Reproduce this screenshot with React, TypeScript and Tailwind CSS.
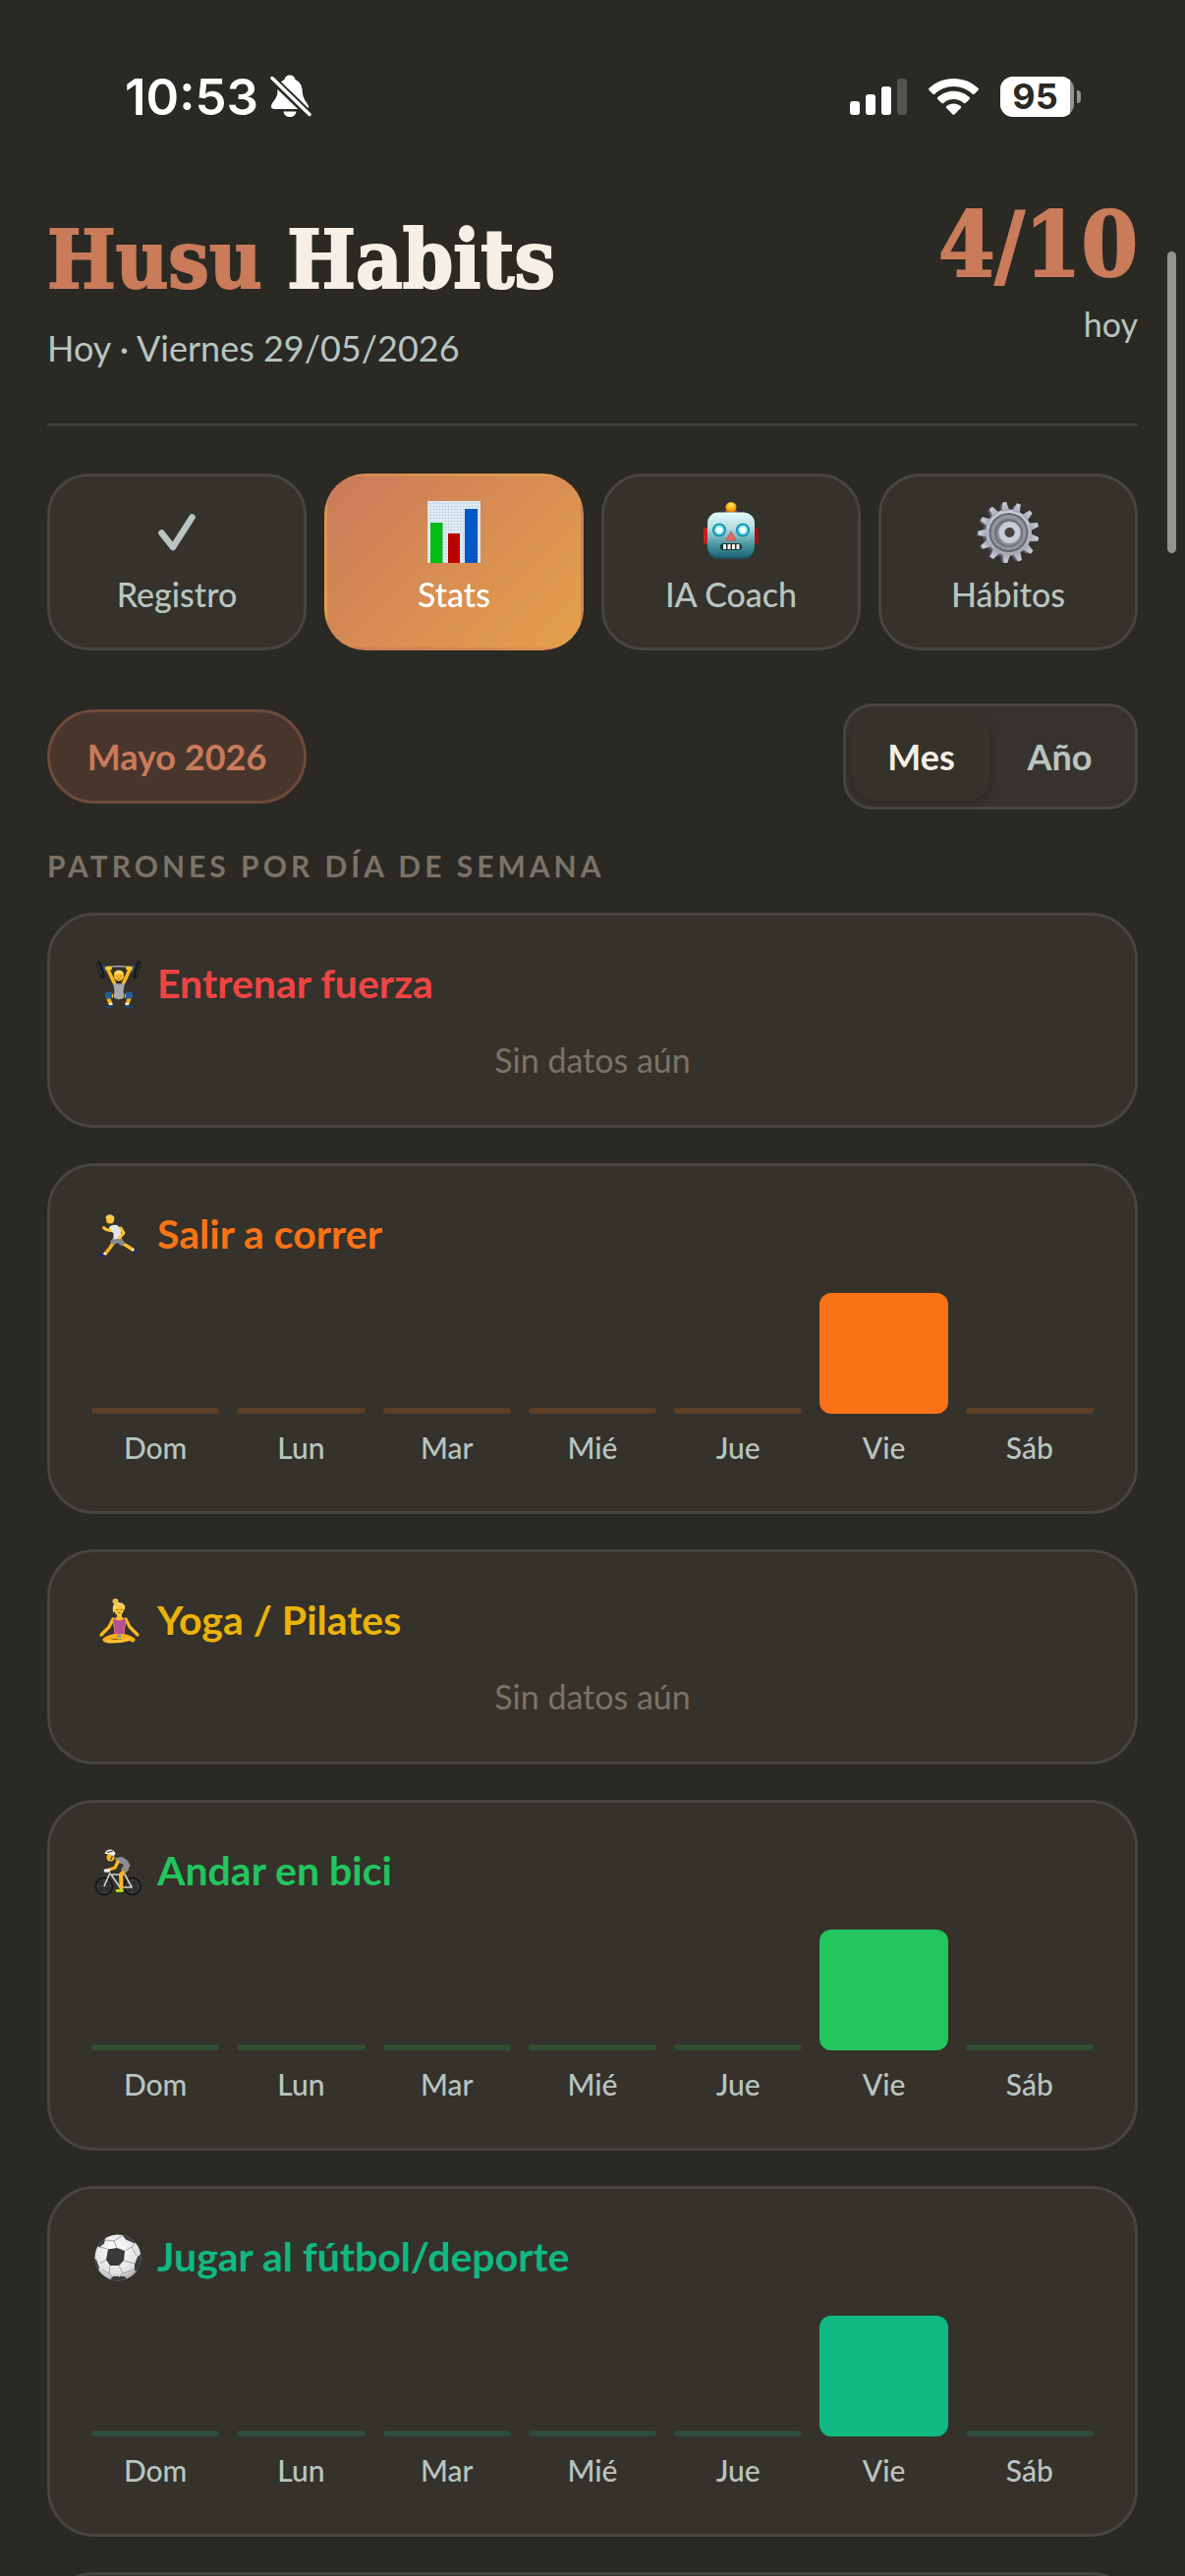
import { useState } from 'react';
import type { ReactNode } from 'react';
import clsx from 'clsx';

const DAYS = ['Dom', 'Lun', 'Mar', 'Mié', 'Jue', 'Vie', 'Sáb'];

type Habit = {
  name: string;
  icon: ReactNode;
  text: string;
  bar: string;
  track: string;
  // completion ratio per weekday, Sunday first; null when nothing was logged
  week: number[] | null;
};

function BellOffIcon() {
  return (
    <svg viewBox="0 0 42 44" className="h-[44px] w-[42px]" fill="none" aria-hidden="true">
      <path
        d="M20 0.5c-3.400 0-5 2.200-5.500 4.500C9 7.500 7.500 13 7.400 18c-.200 7-6.400 10-6.400 14.500C1 34 2 35 4 35h32c2 0 3-1 3-2.500 0-3-6-7-6.200-15-.100-5-1.800-10-7.300-12.500C25 2.700 23.400.5 20 .5Z"
        fill="#fff"
      />
      <path d="M13.500 37.500h13c-.400 3.500-3 5.500-6.500 5.500s-6.100-2-6.500-5.500Z" fill="#fff" />
      <path d="M2 4 40 41" stroke="#2a2924" strokeWidth="8" />
      <path d="M2 3.500 40 40.500" stroke="#fff" strokeWidth="3.500" strokeLinecap="round" />
    </svg>
  );
}

function SignalIcon() {
  return (
    <svg viewBox="0 0 58 37" className="h-[37px] w-[58px]" fill="#fff" aria-hidden="true">
      <rect x="0" y="23" width="10" height="14" rx="3" />
      <rect x="16" y="16" width="10" height="21" rx="3" />
      <rect x="32" y="8" width="10" height="29" rx="3" />
      <rect x="48" y="0" width="10" height="37" rx="3" opacity="0.2" />
    </svg>
  );
}

function WifiIcon() {
  return (
    <svg viewBox="0 0 51 37" className="h-[37px] w-[51px]" fill="#fff" aria-hidden="true">
      <path d="M25.500 0C15.700 0 7 3.700.500 9.800c-.600.600-.600 1.400 0 2l3.900 3.900c.500.500 1.300.500 1.900 0C11.300 10.900 18.100 8 25.500 8s14.200 2.900 19.200 7.700c.600.500 1.400.500 1.900 0l3.900-3.900c.600-.600.600-1.400 0-2C44 3.700 35.300 0 25.500 0Z" />
      <path d="M25.500 12.700c-6.200 0-11.900 2.400-16.200 6.300-.600.500-.600 1.400 0 1.900l3.900 3.900c.500.500 1.300.500 1.900.1 2.800-2.500 6.400-4 10.400-4s7.600 1.500 10.400 4c.600.400 1.400.400 1.900-.1l3.900-3.900c.600-.500.600-1.400 0-1.900-4.300-3.900-10-6.300-16.200-6.300Z" />
      <path d="M25.500 25.400c-2.800 0-5.300 1-7.200 2.700-.600.500-.600 1.300-.1 1.900l6.400 6.500c.500.500 1.300.500 1.800 0l6.400-6.500c.500-.600.500-1.400-.1-1.900-1.900-1.700-4.400-2.700-7.200-2.700Z" />
    </svg>
  );
}

function Battery({ level }: { level: number }) {
  return (
    <div className="flex items-center gap-[3px]">
      <div className="flex h-[41px] w-[75px] overflow-hidden rounded-[13px] bg-[#949391]">
        <span className="flex w-[71px] items-center justify-center bg-white text-[36px] leading-none font-bold text-[#2a2924]">
          {level}
        </span>
      </div>
      <span className="h-[13px] w-1 rounded-r-full bg-[#949391]" />
    </div>
  );
}

function CheckIcon() {
  return (
    <svg viewBox="0 0 66 66" className="size-[66px]" fill="none" aria-hidden="true">
      <path
        d="M17.500 33.500 29 48 48.500 17.500"
        stroke="#b8c5c0"
        strokeWidth="6.500"
        strokeLinecap="round"
        strokeLinejoin="round"
      />
    </svg>
  );
}

function ChartIcon() {
  return (
    <svg viewBox="0 0 66 66" className="size-[66px]" aria-hidden="true">
      <defs>
        <pattern id="grid" width="3" height="3" patternUnits="userSpaceOnUse">
          <rect width="3" height="3" fill="#e6eff6" />
          <path d="M0 0h3M0 0v3" stroke="#b9cddb" strokeWidth="1" />
        </pattern>
      </defs>
      <rect x="6" y="1" width="54" height="63" fill="url(#grid)" />
      <rect x="9" y="23" width="12.500" height="41" fill="#04bb18" />
      <rect x="27" y="34" width="12" height="30" fill="#bb0202" />
      <rect x="44" y="9" width="13" height="55" fill="#0558c4" />
    </svg>
  );
}

function RobotIcon() {
  return (
    <svg viewBox="0 0 66 66" className="size-[66px]" aria-hidden="true">
      <defs>
        <linearGradient id="robot" x1="0" y1="0" x2="0" y2="1">
          <stop offset="0" stopColor="#e2fcfb" />
          <stop offset="0.35" stopColor="#b5dcdc" />
          <stop offset="0.7" stopColor="#4d9ba5" />
          <stop offset="1" stopColor="#1c6577" />
        </linearGradient>
        <radialGradient id="bulb" cx="0.5" cy="0.3" r="0.7">
          <stop offset="0" stopColor="#fff06a" />
          <stop offset="0.6" stopColor="#fdaa0c" />
          <stop offset="1" stopColor="#d86a00" />
        </radialGradient>
      </defs>
      <rect x="5" y="28" width="8" height="17" rx="3" fill="#c81d1d" />
      <rect x="53" y="28" width="8" height="17" rx="3" fill="#a10f12" />
      <path d="M26 14c0-4 3-5 7-5s7 1 7 5v3H26Z" fill="#665084" />
      <circle cx="33" cy="7.500" r="5.500" fill="url(#bulb)" />
      <rect x="9" y="13" width="48" height="47" rx="11" fill="#1d5363" />
      <rect x="9" y="12.500" width="48" height="45.500" rx="11" fill="url(#robot)" />
      <circle cx="21" cy="30.500" r="7" fill="#1893b8" />
      <circle cx="45" cy="30.500" r="7" fill="#1893b8" />
      <circle cx="21" cy="30.500" r="5" fill="#7be3f7" />
      <circle cx="45" cy="30.500" r="5" fill="#7be3f7" />
      <circle cx="21" cy="30.500" r="3.200" fill="#fff" />
      <circle cx="45" cy="30.500" r="3.200" fill="#fff" />
      <path d="m33 32 5 9H28Z" fill="#ea6460" stroke="#c34a4b" strokeWidth="0.800" />
      <rect x="22" y="44" width="22" height="7" rx="3.500" fill="#1e3038" />
      <path d="M25 45h3v5h-3zM29.500 45h3v5h-3zM34 45h3v5h-3zM38.500 45h3v5h-3z" fill="#f4f1e6" />
    </svg>
  );
}

const TEETH = Array.from({ length: 13 }, (_, i) => (i * 360) / 13);

function GearIcon() {
  return (
    <svg viewBox="0 0 66 66" className="size-[66px]" aria-hidden="true">
      <defs>
        <linearGradient id="gear" x1="0" y1="0" x2="0" y2="1">
          <stop offset="0" stopColor="#c9d3df" />
          <stop offset="1" stopColor="#a9a5b2" />
        </linearGradient>
      </defs>
      <g fill="#535a63">
        <circle cx="31" cy="34" r="24" />
        {TEETH.map((angle) => (
          <path
            key={angle}
            d="M27.500 12 29 4h4l1.500 8Z"
            transform={`rotate(${angle - 8} 31 34)`}
          />
        ))}
      </g>
      <g fill="url(#gear)">
        <circle cx="33.500" cy="33" r="23.500" />
        {TEETH.map((angle) => (
          <path
            key={angle}
            d="M29.500 11 31.500 2h4l2 9Z"
            transform={`rotate(${angle - 8} 33.500 33)`}
          />
        ))}
      </g>
      <circle cx="33.500" cy="33" r="20" fill="#656a72" />
      <circle cx="33.500" cy="33" r="18" fill="#90949b" />
      <circle cx="33.500" cy="33.500" r="14.500" fill="#6f7278" />
      <circle cx="34" cy="34" r="12.500" fill="#8d8c92" />
      <circle cx="34.500" cy="33" r="8" fill="none" stroke="#c5cedb" strokeWidth="6" />
      <circle cx="34.500" cy="33" r="5" fill="#4b403c" />
    </svg>
  );
}

function LifterIcon() {
  return (
    <svg viewBox="0 0 51 54" className="h-[54px] w-[51px]" fill="none" aria-hidden="true">
      <path d="M14 11q13-3 28 0" stroke="#aab1b6" strokeWidth="1.300" />
      <g strokeLinecap="round">
        <path d="m7.500 7 4 12.500M48.500 7l-4 12.500" stroke="#17191b" strokeWidth="5" />
        <path d="m6.500 7 3.500 11M49.500 7 46 18" stroke="#34383b" strokeWidth="1.500" />
        <path d="m13 9 1.500 5M43 9l-1.500 5" stroke="#23557f" strokeWidth="2.500" />
      </g>
      <path
        d="m17 13 6.500 14M39 13l-6.500 14"
        stroke="#f8b91f"
        strokeWidth="3.600"
        strokeLinecap="round"
      />
      <path d="M16 11.500h3M37 11.500h3" stroke="#fdc834" strokeWidth="4" strokeLinecap="round" />
      <path d="M22 26q6 3 12 0l-1.500 9 1 6q-5.500 4.500-11 0l1-6Z" fill="#a9a9ad" />
      <path
        d="M22 39.500h-5.500l3 8.500M34 39.500h5.500l-3 8.500"
        stroke="#f4b01c"
        strokeWidth="4"
        strokeLinejoin="round"
      />
      <path
        d="M15.500 37h4v4h-4zM36.500 37h4v4h-4z"
        fill="#245d94"
        stroke="#245d94"
        strokeWidth="3"
        strokeLinejoin="round"
      />
      <path d="M18 48h3.500M34.500 48H38" stroke="#eef0f2" strokeWidth="2.500" />
      <path
        d="m14.500 51.500 6.500-1M41.500 51.500l-6.500-1"
        stroke="#1a4366"
        strokeWidth="2.500"
        strokeLinecap="round"
      />
      <circle cx="28" cy="19.500" r="5" fill="#fcc52e" />
      <path d="M23 18c0-6 10-6 10 0-3-2-7-2-10 0Z" fill="#f4dc74" />
      <path d="M25.500 19.500h1.500M29 19.500h1.500M26.500 22h3" stroke="#8c5a0c" strokeWidth="0.800" />
    </svg>
  );
}

function RunnerIcon() {
  return (
    <svg viewBox="0 0 51 54" className="h-[54px] w-[51px]" fill="none" aria-hidden="true">
      <path
        d="m23 35-4 6-5.500 7"
        stroke="#f3ae1d"
        strokeWidth="3.600"
        strokeLinecap="round"
        strokeLinejoin="round"
      />
      <path d="m30 36 6 3 6 4" stroke="#fbbf2b" strokeWidth="3.400" strokeLinecap="round" />
      <path d="m22 31 8-1 4.500 7-4 2-4-3-3.500 2-4-3Z" fill="#8a8b8e" />
      <path d="M18 20q3-3 8-2l4 3 .500 9q-4 3-8 2l0-6-4-2Z" fill="#e3e4e8" />
      <path
        d="m30 21 3 5-4.500 5M19 23.500l-4-1-2.500-2"
        stroke="#fcc02c"
        strokeWidth="3"
        strokeLinecap="round"
        strokeLinejoin="round"
      />
      <circle cx="19" cy="12.500" r="4" fill="#fcc52e" />
      <path d="M14.500 11c0-5 8.500-5 9 0l-1 3.500-2.500-3Z" fill="#f3cf57" />
      <path d="m13 48 1.500-1.500M42 43.500l1.500-1" stroke="#fff" strokeWidth="2.500" />
      <path
        d="m7.500 48 6 1.500M43.500 47l2-5"
        stroke="#20275e"
        strokeWidth="2.600"
        strokeLinecap="round"
      />
    </svg>
  );
}

function YogaIcon() {
  return (
    <svg viewBox="0 0 51 54" className="h-[54px] w-[51px]" fill="none" aria-hidden="true">
      <circle cx="24.500" cy="8" r="3" fill="#edba4b" />
      <path
        d="m22 26-4 8-8 8M35 26l4 8 8 8"
        stroke="#fbb91f"
        strokeWidth="3.200"
        strokeLinecap="round"
        strokeLinejoin="round"
      />
      <path d="M26 20h5v4l5 2-2 9v8H23v-8l-2-9 5-2Z" fill="#fbbc28" />
      <path d="M23 25q5.500 5 11 0l1 4-1.500 5 .500 9H23l.500-9L22 29Z" fill="#b94f96" />
      <path
        d="M14 47q8-5 15-3M42 47q-8-5-14-3"
        stroke="#f6ab1b"
        strokeWidth="5"
        strokeLinecap="round"
      />
      <path d="M16 48.500q12 1 22-2" stroke="#fdbf30" strokeWidth="3.500" strokeLinecap="round" />
      <path d="M26 43.500h4" stroke="#4e9bd8" strokeWidth="1.800" />
      <ellipse cx="28" cy="16" rx="5" ry="6" fill="#fdc52e" />
      <path d="M22.500 20c-2-7 0-11 5-11 6 0 8 4 6 8q-2-5-6-5-2 1-3 4Z" fill="#f0d06c" />
      <path d="M25.500 16.500h2M29.500 16.500h2M27 19.500h2.500" stroke="#8b5210" strokeWidth="0.900" />
    </svg>
  );
}

function BikeIcon() {
  return (
    <svg viewBox="0 0 51 54" className="h-[54px] w-[51px]" fill="none" aria-hidden="true">
      <g fill="#2c2b29" stroke="#141618" strokeWidth="1.800">
        <circle cx="13" cy="43" r="8.500" />
        <circle cx="41.500" cy="43" r="8.500" />
      </g>
      <g stroke="#54585c" strokeWidth="0.600">
        <circle cx="13" cy="43" r="6.800" />
        <circle cx="41.500" cy="43" r="6.800" />
        <path d="M13 36v14M6 43h14M41.500 36v14M35 43h13" />
      </g>
      <path
        d="m13 43 6-14M20 31l9 13h12l-7-13ZM20 31h14"
        stroke="#cfd3d7"
        strokeWidth="1.600"
        strokeLinejoin="round"
      />
      <path d="M11 23v4h6" stroke="#3a3d40" strokeWidth="1.800" />
      <path
        d="m36 25-6 6 .500 14"
        stroke="#fcb81f"
        strokeWidth="4"
        strokeLinecap="round"
        strokeLinejoin="round"
      />
      <path d="m24 14 7-1q7 3 8.500 9l-4.500 7-5-3 3-5-8-3Z" fill="#8b8d91" />
      <path
        d="m27 18-3 6-7 2.500"
        stroke="#fcb81f"
        strokeWidth="3.400"
        strokeLinecap="round"
        strokeLinejoin="round"
      />
      <path d="M14.500 27h3" stroke="#eef0f2" strokeWidth="3.600" strokeLinecap="round" />
      <path d="M26 47.500h5.500" stroke="#b6d619" strokeWidth="2.800" strokeLinecap="round" />
      <circle cx="19.500" cy="13.500" r="4" fill="#fbb51e" />
      <path d="M13.500 10c1-6 10-6 11 0l-2 2q-4-2.500-9-2Z" fill="#eceef0" />
      <path d="m16 8.500 6-1.500M21.500 12l-2 4" stroke="#34373a" strokeWidth="1.100" />
    </svg>
  );
}

function BallIcon() {
  return (
    <svg viewBox="0 0 51 54" className="h-[54px] w-[51px]" aria-hidden="true">
      <defs>
        <radialGradient id="ball" cx="0.45" cy="0.35" r="0.65">
          <stop offset="0" stopColor="#fff" />
          <stop offset="0.75" stopColor="#e2e2e2" />
          <stop offset="1" stopColor="#a9a9a9" />
        </radialGradient>
        <clipPath id="ball-clip">
          <circle cx="27" cy="28" r="23.500" />
        </clipPath>
      </defs>
      <circle cx="27" cy="28" r="23.500" fill="url(#ball)" />
      <g clipPath="url(#ball-clip)">
        <g fill="#3a3a3c">
          <path d="m17 19.500 9-1.500 8 3-1 10-5 5H19l-4-6Z" />
          <path d="m31 4.500 4 5 9 4 3-2-9-10ZM14 9.500l-1 4-5 4-3-3 5-7ZM52 23l-5 4-3 8v6l6 2ZM19 53l2-6h13l2 3-2 4ZM2 29l3 1 3 8-1 4-5-3Z" />
        </g>
        <path
          d="M26 18 23 11l-9-1M23 11l8-5M34 21l7-4 3-3M41 17l5 9M17 19.500l-6-2-3 0M15 30l-6 4M19 36l-1 8-7-4M28 36l4 8 11-4M32 44l-4 4M18 44l4 4M33 31l11 3"
          fill="none"
          stroke="#a4a4a4"
          strokeWidth="1"
        />
      </g>
    </svg>
  );
}

const TABS = [
  { id: 'registro', label: 'Registro', icon: <CheckIcon /> },
  { id: 'stats', label: 'Stats', icon: <ChartIcon /> },
  { id: 'coach', label: 'IA Coach', icon: <RobotIcon /> },
  { id: 'habitos', label: 'Hábitos', icon: <GearIcon /> },
];

const ONLY_FRIDAY = [0, 0, 0, 0, 0, 1, 0];

const HABITS: Habit[] = [
  {
    name: 'Entrenar fuerza',
    icon: <LifterIcon />,
    text: 'text-[#ef4444]',
    bar: 'bg-[#ef4444]',
    track: 'bg-[#ef4444]/20',
    week: null,
  },
  {
    name: 'Salir a correr',
    icon: <RunnerIcon />,
    text: 'text-[#f97316]',
    bar: 'bg-[#f97316]',
    track: 'bg-[#f97316]/20',
    week: ONLY_FRIDAY,
  },
  {
    name: 'Yoga / Pilates',
    icon: <YogaIcon />,
    text: 'text-[#eab308]',
    bar: 'bg-[#eab308]',
    track: 'bg-[#eab308]/20',
    week: null,
  },
  {
    name: 'Andar en bici',
    icon: <BikeIcon />,
    text: 'text-[#22c55e]',
    bar: 'bg-[#22c55e]',
    track: 'bg-[#22c55e]/20',
    week: ONLY_FRIDAY,
  },
  {
    name: 'Jugar al fútbol/deporte',
    icon: <BallIcon />,
    text: 'text-[#10b981]',
    bar: 'bg-[#10b981]',
    track: 'bg-[#10b981]/20',
    week: ONLY_FRIDAY,
  },
];

function StatusBar() {
  return (
    <div className="flex h-[60px] shrink-0 items-center justify-between pr-[106px] pl-[127px] font-['Inter',sans-serif] text-white">
      <div className="flex items-center gap-3">
        <span className="text-[51px] leading-none font-semibold">10:53</span>
        <BellOffIcon />
      </div>
      <div className="flex items-center gap-[22px]">
        <SignalIcon />
        <WifiIcon />
        <Battery level={95} />
      </div>
    </div>
  );
}

function WeekChart({ habit, week }: { habit: Habit; week: number[] }) {
  return (
    <div className="mt-[33px] grid grid-cols-7 gap-x-[18px]">
      {week.map((ratio, index) => (
        <div key={DAYS[index]}>
          <div className="flex h-[123px] items-end">
            {ratio > 0 ? (
              <div
                className={clsx('w-full rounded-xl', habit.bar)}
                style={{ height: `${ratio * 100}%` }}
              />
            ) : (
              <div className={clsx('h-1.5 w-full rounded-full', habit.track)} />
            )}
          </div>
          <p className="mt-3 text-center text-[30px] leading-[45px] font-medium text-[#b8c5c0]">
            {DAYS[index]}
          </p>
        </div>
      ))}
    </div>
  );
}

function HabitCard({ habit }: { habit: Habit }) {
  return (
    <article className="rounded-[48px] border-3 border-[#474540] bg-[#35312b] p-[42px]">
      <h3
        className={clsx(
          'flex items-center gap-4 text-[41px] leading-[54px] font-bold',
          habit.text
        )}
      >
        {habit.icon}
        {habit.name}
      </h3>
      {habit.week ? (
        <WeekChart habit={habit} week={habit.week} />
      ) : (
        <p className="mt-[27px] text-center text-[34px] leading-[48px] text-[#7a7368]">
          Sin datos aún
        </p>
      )}
    </article>
  );
}

export default function App() {
  const [tab, setTab] = useState('stats');
  const [range, setRange] = useState('Mes');

  return (
    <div className="relative flex h-screen flex-col overflow-hidden bg-[#2a2924] pt-[68px] font-['Lato',sans-serif]">
      <StatusBar />

      <main className="shrink-0 px-12 pt-[76px]">
        <header className="flex items-start justify-between border-b-3 border-[#3d3b36] pb-[53px]">
          <div className="pt-3">
            <h1 className="font-['DejaVu_Serif_Condensed','DejaVu_Serif',serif] text-[82px] leading-[96px] font-bold text-[#f5efe6] [-webkit-text-stroke:2px_currentColor]">
              <span className="text-[#c97b5a]">Husu</span> Habits
            </h1>
            <p className="mt-[18px] text-[36px] leading-[48px] text-[#b8c5c0]">
              Hoy · Viernes 29/05/2026
            </p>
          </div>
          <div className="text-right">
            <p className="font-['DejaVu_Serif_Condensed','DejaVu_Serif',serif] text-[92px] leading-[90px] font-bold text-[#c97b5a] [-webkit-text-stroke:2px_currentColor]">
              4/10
            </p>
            <p className="mt-3 text-[34px] leading-[48px] text-[#b8c5c0]">hoy</p>
          </div>
        </header>

        <nav className="mt-12 grid grid-cols-4 gap-[18px]">
          {TABS.map((item) => (
            <button
              key={item.id}
              type="button"
              onClick={() => setTab(item.id)}
              className={clsx(
                'flex min-h-[180px] flex-col items-center gap-[9px] rounded-[42px] border-3 pt-6 text-[34px] leading-[42px] font-medium',
                tab === item.id
                  ? 'border-transparent bg-[linear-gradient(135deg,#c97b5a,#e5a04c)] text-white'
                  : 'border-[#474540] bg-[#35312b] text-[#b8c5c0]'
              )}
            >
              {item.icon}
              {item.label}
            </button>
          ))}
        </nav>

        <div className="mt-[54px] flex items-center justify-between text-[36px] font-bold">
          <button
            type="button"
            className="h-24 min-w-[264px] rounded-full border-3 border-[#6e4a3b] bg-[#48362d] px-9 text-[#c97b5a]"
          >
            Mayo 2026
          </button>
          <div className="grid h-[108px] w-[300px] grid-cols-2 rounded-[30px] border-3 border-[#474540] bg-[#36332e] p-1.5">
            {['Mes', 'Año'].map((option) => (
              <button
                key={option}
                type="button"
                aria-pressed={range === option}
                onClick={() => setRange(option)}
                className={clsx(
                  'rounded-3xl',
                  range === option
                    ? 'bg-[#35312b] text-[#f5efe6] shadow-[0_3px_9px_rgba(0,0,0,0.2)]'
                    : 'text-[#b8c5c0]'
                )}
              >
                {option}
              </button>
            ))}
          </div>
        </div>

        <section>
          <h2 className="mt-9 text-[30px] leading-[42px] font-bold tracking-[4px] text-[#7a7368] uppercase">
            Patrones por día de semana
          </h2>
          <div className="mt-[27px] flex flex-col gap-9">
            {HABITS.map((habit) => (
              <HabitCard key={habit.name} habit={habit} />
            ))}
            <article className="h-[219px] rounded-[48px] border-3 border-[#474540] bg-[#35312b]" />
          </div>
        </section>
      </main>

      {/* scroll thumb */}
      <div className="absolute top-[256px] right-[9px] h-[307px] w-[9px] rounded-full bg-[#949391]" />
    </div>
  );
}
